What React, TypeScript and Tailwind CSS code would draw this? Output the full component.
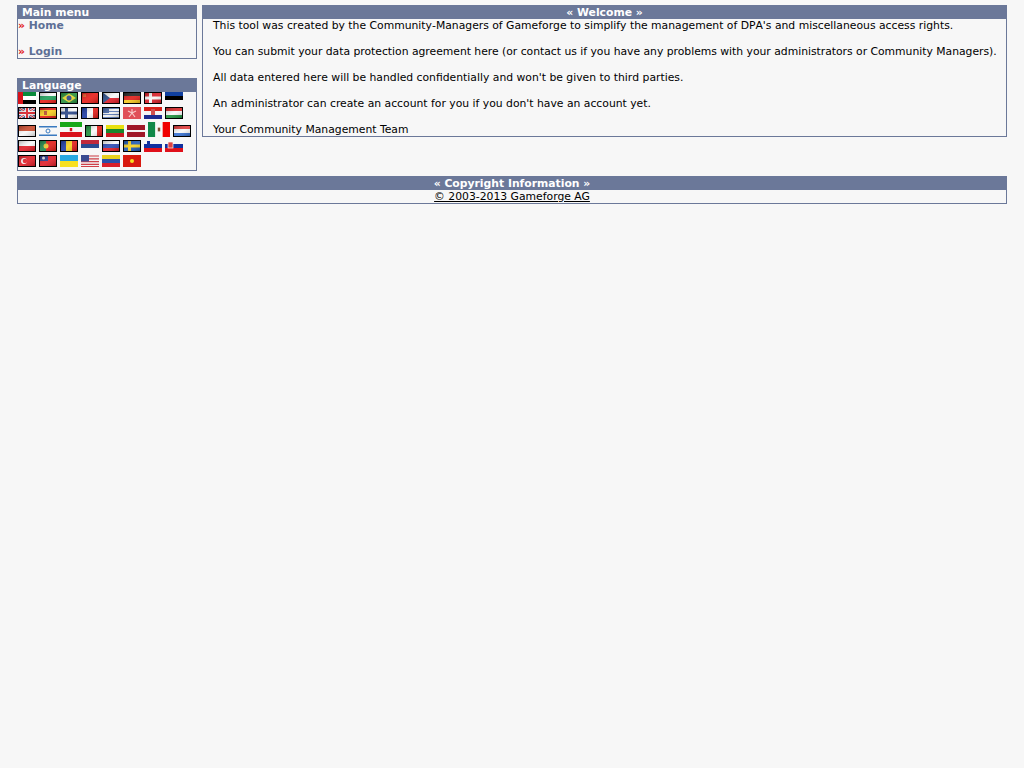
import type { ReactNode } from 'react';

type FlagDef = { name: string; w?: number; h?: number; plain?: boolean; art: ReactNode };

// three horizontal stripes
const hs = (a: string, b: string, c: string) => (
  <>
    <rect width="18" height="4" fill={a} />
    <rect y="4" width="18" height="4" fill={b} />
    <rect y="8" width="18" height="4" fill={c} />
  </>
);

// three vertical stripes
const vs = (a: string, b: string, c: string) => (
  <>
    <rect width="6" height="12" fill={a} />
    <rect x="6" width="6" height="12" fill={b} />
    <rect x="12" width="6" height="12" fill={c} />
  </>
);

const ROWS: FlagDef[][] = [
  [
    { name: 'ae', plain: true, art: <>{hs('#0a8a3a', '#ffffff', '#000000')}<rect width="5" height="12" fill="#d8121a" /></> },
    { name: 'bg', art: hs('#f8f8f8', '#109a50', '#e8100a') },
    { name: 'br', art: <><rect width="18" height="12" fill="#1c8a30" /><path d="M9 1.5 16 6 9 10.5 2 6z" fill="#e8d820" /><circle cx="9" cy="6" r="2.5" fill="#1c3a80" /></> },
    { name: 'cn', art: <><rect width="18" height="12" fill="#e8100a" /><rect x="2" y="2" width="3" height="3" fill="#e8501a" /></> },
    { name: 'cz', art: <><rect width="18" height="6" fill="#f8f8f8" /><rect y="6" width="18" height="6" fill="#e0101a" /><path d="M0 0 8 6 0 12z" fill="#1c4080" /></> },
    { name: 'de', art: hs('#181818', '#e0100a', '#f8c810') },
    { name: 'dk', art: <><rect width="18" height="12" fill="#d8101a" /><rect x="5" width="3" height="12" fill="#f8f8f8" /><rect y="4.5" width="18" height="3" fill="#f8f8f8" /></> },
    { name: 'ee', plain: true, art: hs('#1040a0', '#000000', '#f7f7f7') },
  ],
  [
    { name: 'gb', art: <><rect width="18" height="12" fill="#2a3a80" /><path d="M0 0 18 12M18 0 0 12" stroke="#eeeeee" strokeWidth="2.4" /><path d="M0 0 18 12M18 0 0 12" stroke="#d8101a" strokeWidth="1" /><rect x="7" width="4" height="12" fill="#eeeeee" /><rect y="4" width="18" height="4" fill="#eeeeee" /><rect x="8" width="2" height="12" fill="#d8101a" /><rect y="5" width="18" height="2" fill="#d8101a" /></> },
    { name: 'es', art: <><rect width="18" height="12" fill="#e0100a" /><rect y="3" width="18" height="6" fill="#f8c810" /><rect x="5" y="4" width="3" height="4" fill="#b04020" /></> },
    { name: 'fi', art: <><rect width="18" height="12" fill="#f8f8f8" /><rect x="5" width="3" height="12" fill="#1c3a80" /><rect y="4.5" width="18" height="3" fill="#1c3a80" /></> },
    { name: 'fr', art: vs('#1030a0', '#f8f8f8', '#e0100a') },
    { name: 'gr', art: <><rect width="18" height="12" fill="#f0f0f0" /><path d="M0 1.5H18M0 4.5H18M0 7.5H18M0 10.5H18" stroke="#5070b0" strokeWidth="1.2" /><rect width="7" height="6" fill="#3a5ca0" /></> },
    { name: 'hk', plain: true, art: <><rect width="18" height="12" fill="#e05058" /><path d="M9 2 9 6M9 6 5 4M9 6 13 4M9 6 6 10M9 6 12 10" stroke="#f8c8c8" strokeWidth="1.2" /></> },
    { name: 'hr', plain: true, art: <>{hs('#d8201a', '#f4f4f4', '#1c2a90')}<rect x="7" y="2" width="4" height="6" fill="#d05050" /></> },
    { name: 'hu', art: hs('#d81818', '#f8f8f8', '#108a30') },
  ],
  [
    { name: 'id', art: <><rect width="18" height="6" fill="#c84020" /><rect y="6" width="18" height="6" fill="#f8f8f8" /></> },
    { name: 'il', plain: true, art: <><rect width="18" height="12" fill="#f7f7f7" /><rect y="1" width="18" height="1.5" fill="#3a7ac0" /><rect y="9.5" width="18" height="1.5" fill="#3a7ac0" /><circle cx="9" cy="6" r="2" fill="none" stroke="#3a7ac0" /></> },
    { name: 'ir', w: 22, h: 15, plain: true, art: <><rect width="18" height="12" fill="#f7f7f7" /><rect width="18" height="4" fill="#18a818" /><rect y="8" width="18" height="4" fill="#d8101a" /><rect x="8" y="4.8" width="2" height="2.6" fill="#d8101a" /></> },
    { name: 'it', art: vs('#108a30', '#f8f8f8', '#e0100a') },
    { name: 'lt', plain: true, art: hs('#e8e010', '#18882c', '#c81a20') },
    { name: 'lv', plain: true, art: <><rect width="18" height="12" fill="#a01828" /><rect y="5" width="18" height="2" fill="#f4f4f4" /></> },
    { name: 'mx', w: 22, h: 15, plain: true, art: <>{vs('#108848', '#f7f7f7', '#f00000')}<rect x="8" y="4.5" width="2" height="3" fill="#805030" /></> },
    { name: 'nl', art: hs('#e03030', '#f8f8f8', '#2a68d0') },
  ],
  [
    { name: 'pl', art: <><rect width="18" height="6" fill="#f8f8f8" /><rect y="6" width="18" height="6" fill="#e0101a" /></> },
    { name: 'pt', art: <><rect width="18" height="12" fill="#e0100a" /><rect width="7" height="12" fill="#108040" /><circle cx="7" cy="6" r="2.5" fill="#e8c020" /></> },
    { name: 'ro', art: vs('#1030a0', '#f8d010', '#e0100a') },
    { name: 'rs', plain: true, art: hs('#c0283a', '#2a4a90', '#f7f7f7') },
    { name: 'ru', art: hs('#f8f8f8', '#2040b0', '#e0101a') },
    { name: 'se', art: <><rect width="18" height="12" fill="#1050b0" /><rect x="5" width="3" height="12" fill="#f8d010" /><rect y="4.5" width="18" height="3" fill="#f8d010" /></> },
    { name: 'si', plain: true, art: <>{hs('#f7f7f7', '#1030a0', '#e0101a')}<rect x="3" y="1" width="3" height="4" fill="#1030a0" /></> },
    { name: 'sk', plain: true, art: <>{hs('#f7f7f7', '#1030a0', '#e0101a')}<rect x="3" y="2" width="5" height="6" fill="#e04040" stroke="#f4f4f4" strokeWidth="0.7" /></> },
  ],
  [
    { name: 'tr', art: <><rect width="18" height="12" fill="#e0101a" /><circle cx="6" cy="6" r="3" fill="#f8f8f8" /><circle cx="7" cy="6" r="2.3" fill="#e0101a" /></> },
    { name: 'tw', art: <><rect width="18" height="12" fill="#e0101a" /><rect width="9" height="6" fill="#1c2a80" /><circle cx="4.5" cy="3" r="1.5" fill="#f0f0f0" /></> },
    { name: 'ua', plain: true, art: <><rect width="18" height="6" fill="#28a8e0" /><rect y="6" width="18" height="6" fill="#f8e020" /></> },
    { name: 'us', plain: true, art: <><rect width="18" height="12" fill="#f0f0f0" /><path d="M0 1H18M0 3.8H18M0 6.6H18M0 9.4H18M0 11.6H18" stroke="#d04048" strokeWidth="1.2" /><rect width="8" height="6.5" fill="#3a4a90" /></> },
    { name: 've', plain: true, art: <>{hs('#e8d020', '#2a50a8', '#d8202a')}</> },
    { name: 'vn', plain: true, art: <><rect width="18" height="12" fill="#d81a10" /><circle cx="9" cy="6" r="2" fill="#f8e020" /></> },
  ],
];

function Flag({ flag }: { flag: FlagDef }) {
  const w = flag.w ?? 18;
  const h = flag.h ?? 12;
  return (
    <svg
      width={w}
      height={h}
      viewBox="0 0 18 12"
      preserveAspectRatio="none"
      className={flag.plain ? 'block shrink-0' : 'block shrink-0 outline-1 -outline-offset-1 outline-black'}
    >
      <defs>
        <linearGradient id={`gloss-${flag.name}`} x1="0" y1="0" x2="1" y2="1">
          <stop offset="0" stopColor="#000" stopOpacity="0.35" />
          <stop offset="0.5" stopColor="#fff" stopOpacity="0.15" />
          <stop offset="1" stopColor="#000" stopOpacity="0.3" />
        </linearGradient>
      </defs>
      <g className={flag.plain ? '' : 'blur-[0.4px]'}>{flag.art}</g>
      {!flag.plain && <rect width="18" height="12" fill={`url(#gloss-${flag.name})`} />}
    </svg>
  );
}

function Panel({ title, center, children }: { title: string; center?: boolean; children: ReactNode }) {
  return (
    <div className="border-x border-b border-[#6b7899]">
      <div className={`-mx-px h-[14px] bg-[#6b7899] px-[5px] pt-px leading-[13px] font-bold text-white ${center ? 'text-center' : ''}`}>
        {title}
      </div>
      {children}
    </div>
  );
}

export default function App() {
  return (
    <div className="min-h-[768px] bg-[#f7f7f7] px-[17px] pt-[5px] font-['DejaVu_Sans',sans-serif] text-[10.8px] leading-[13px] text-black">
      <div className="flex gap-[5px]">
        <div className="w-[180px] shrink-0">
          <Panel title="Main menu">
            <div className="h-[39px] font-bold text-[#5d6f96]">
              <div>
                <span className="text-[#e01010]">»</span> Home
              </div>
              <div className="mt-[13px]">
                <span className="text-[#e01010]">»</span> Login
              </div>
            </div>
          </Panel>
          <div className="mt-[19px]">
            <Panel title="Language">
              <div className="flex h-[78px] flex-col gap-[3px]">
                {ROWS.map((row, i) => (
                  <div key={i} className="flex items-end gap-[3px]">
                    {row.map((flag) => (
                      <Flag key={flag.name} flag={flag} />
                    ))}
                  </div>
                ))}
              </div>
            </Panel>
          </div>
        </div>
        <div className="min-w-0 flex-1 self-start">
          <Panel title="« Welcome »" center>
            <div className="pl-[10px]">
              <p className="[font-kerning:none]">This tool was created by the Community-Managers of Gameforge to simplify the management of DPA's and miscellaneous access rights.</p>
              <p className="mt-[13px] tracking-[-0.015px]">You can submit your data protection agreement here (or contact us if you have any problems with your administrators or Community Managers).</p>
              <p className="mt-[13px] [font-kerning:none]">All data entered here will be handled confidentially and won't be given to third parties.</p>
              <p className="mt-[13px]">An administrator can create an account for you if you don't have an account yet.</p>
              <p className="mt-[13px]">Your Community Management Team</p>
            </div>
          </Panel>
        </div>
      </div>
      <div className="mt-[5px]">
        <Panel title="« Copyright Information »" center>
          <div className="text-center">
            <a className="underline">© 2003-2013 Gameforge AG</a>
          </div>
        </Panel>
      </div>
    </div>
  );
}
